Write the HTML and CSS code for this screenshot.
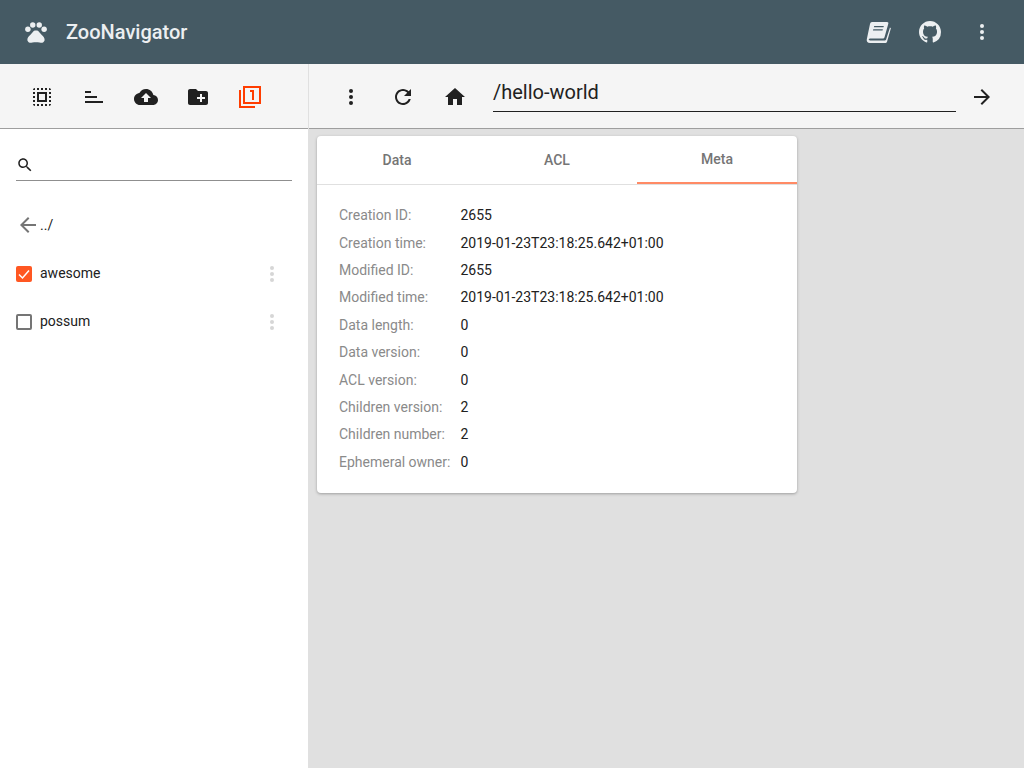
FILE: index.html
```html
<!DOCTYPE html>
<html lang="en">
<head>
    <meta charset="UTF-8">
    <title>ZooNavigator</title>
    <link rel="stylesheet" href="styles.css">
</head>
<body>
    <header class="topbar">
        <svg class="paw" width="26" height="26" viewBox="0 0 24 24"><circle cx="4.500" cy="9.500" r="2.500"/><circle cx="9" cy="5.500" r="2.500"/><circle cx="15" cy="5.500" r="2.500"/><circle cx="19.500" cy="9.500" r="2.500"/><path d="M17.34 14.86c-.87-1.02-1.6-1.89-2.48-2.91-.46-.54-1.05-1.08-1.75-1.32-.11-.04-.22-.07-.33-.09-.25-.04-.52-.04-.78-.04s-.53 0-.79.05c-.11.02-.22.05-.33.09-.7.24-1.28.78-1.75 1.32-.87 1.02-1.6 1.89-2.48 2.91-1.31 1.31-2.92 2.76-2.62 4.79.29 1.02 1.02 2.03 2.33 2.32.73.15 3.06-.44 5.54-.44h.18c2.48 0 4.81.58 5.54.44 1.31-.29 2.04-1.31 2.33-2.32.31-2.04-1.3-3.49-2.61-4.8z"/></svg>
        <span class="brand">ZooNavigator</span>
        <div class="topbar-actions">
            <button class="icon-btn">
                <svg width="28" height="24" viewBox="0 0 28 24"><path d="M8 2h15c1.2 0 1.6.8 1.3 1.8L20.6 17c-.3 1-1 1.5-2 1.5H6c-1 0-1.5.8-1.2 1.3.3.5.8.7 1.5.7h14.5c.6 0 1-.3 1.2-.8L26 7.6l.9.6-3.8 13.2c-.3 1-1.1 1.6-2.2 1.6H6c-2.3 0-3.7-1.700-3.2-3.800L6 4c.3-1.2 1-2 2-2zm2.200 4-.3 1.200h9.600l.3-1.200zm-.9 3.200-.4 1.200h9.600l.4-1.200z" fill-rule="evenodd"/></svg>
            </button>
            <button class="icon-btn">
                <svg width="22" height="22" viewBox="0 0 16 16"><path d="M8 0C3.58 0 0 3.58 0 8c0 3.54 2.29 6.53 5.47 7.59.4.07.55-.17.55-.38 0-.19-.01-.82-.01-1.49-2.01.37-2.53-.49-2.69-.94-.09-.23-.48-.94-.82-1.13-.28-.15-.68-.52-.01-.53.63-.01 1.08.58 1.23.82.72 1.21 1.87.87 2.33.66.07-.52.28-.87.51-1.07-1.78-.2-3.64-.89-3.64-3.95 0-.87.31-1.59.82-2.15-.08-.2-.36-1.02.08-2.12 0 0 .67-.21 2.2.82.64-.18 1.32-.27 2-.27s1.36.09 2 .27c1.53-1.04 2.2-.82 2.2-.82.44 1.1.16 1.92.08 2.12.51.56.82 1.27.82 2.15 0 3.07-1.87 3.75-3.65 3.95.29.25.54.73.54 1.48 0 1.07-.01 1.93-.01 2.2 0 .21.15.46.55.38A8.01 8.01 0 0 0 16 8c0-4.42-3.58-8-8-8z"/></svg>
            </button>
            <button class="icon-btn">
                <svg width="24" height="24" viewBox="0 0 24 24"><circle cx="12" cy="6" r="2"/><circle cx="12" cy="12" r="2"/><circle cx="12" cy="18" r="2"/></svg>
            </button>
        </div>
    </header>

    <div class="content">
        <aside class="sidebar">
            <div class="toolbar side-toolbar">
                <button class="icon-btn">
                    <svg width="24" height="24" viewBox="0 0 24 24"><path d="M3 5h2V3c-1.1 0-2 .9-2 2zm0 8h2v-2H3v2zm4 8h2v-2H7v2zM3 9h2V7H3v2zm10-6h-2v2h2V3zm6 0v2h2c0-1.100-.9-2-2-2zM5 21v-2H3c0 1.100.9 2 2 2zm-2-4h2v-2H3v2zM9 3H7v2h2V3zm2 18h2v-2h-2v2zm8-8h2v-2h-2v2zm0 8c1.100 0 2-.9 2-2h-2v2zm0-12h2V7h-2v2zm0 8h2v-2h-2v2zm-4 4h2v-2h-2v2zm0-16h2V3h-2v2zM7 17h10V7H7v10zm2-8h6v6H9V9z"/></svg>
                </button>
                <button class="icon-btn">
                    <svg width="24" height="24" viewBox="0 0 24 24"><path d="M3 18h18v-2H3v2zM3 6v2h6V6H3zm0 7h12v-2H3v2z"/></svg>
                </button>
                <button class="icon-btn">
                    <svg width="24" height="24" viewBox="0 0 24 24"><path d="M19.35 10.04C18.67 6.59 15.64 4 12 4 9.11 4 6.6 5.64 5.35 8.04 2.34 8.36 0 10.91 0 14c0 3.31 2.69 6 6 6h13c2.76 0 5-2.24 5-5 0-2.64-2.05-4.78-4.65-4.96zM14 13v4h-4v-4H7l5-5 5 5h-3z"/></svg>
                </button>
                <button class="icon-btn">
                    <svg width="24" height="24" viewBox="0 0 24 24"><path d="M20 6h-8l-2-2H4c-1.11 0-1.99.89-1.99 2L2 18c0 1.11.89 2 2 2h16c1.11 0 2-.89 2-2V8c0-1.11-.89-2-2-2zm-1 8h-3v3h-2v-3h-3v-2h3V9h2v3h3v2z"/></svg>
                </button>
                <button class="icon-btn clip-btn">
                    <svg width="24" height="24" viewBox="0 0 24 24"><path d="M3 5H1v18h16v-2H3V5zm11 10h2V5h-4v2h2v8zm9-14H5v18h18V1zm-2 16H7V3h14v14z"/></svg>
                </button>
            </div>
            <div class="search">
                <svg width="18" height="18" viewBox="0 0 24 24"><path d="M15.5 14h-.79l-.28-.27C15.41 12.59 16 11.11 16 9.500 16 5.910 13.090 3 9.500 3S3 5.910 3 9.500 5.910 16 9.500 16c1.610 0 3.090-.59 4.230-1.570l.27.28v.79l5 4.990L20.490 19l-4.990-5zm-6 0C7.010 14 5 11.990 5 9.500S7.010 5 9.500 5 14 7.010 14 9.500 11.990 14 9.500 14z"/></svg>
            </div>
            <div class="parent-row">
                <svg class="back" width="24" height="24" viewBox="0 0 24 24"><path d="M20 11H7.830l5.590-5.590L12 4l-8 8 8 8 1.410-1.410L7.830 13H20v-2z"/></svg>
                <span>../</span>
            </div>
            <ul class="nodes">
                <li class="node">
                    <span class="check checked">
                        <svg width="16" height="16" viewBox="0 0 16 16"><path d="M3 8.500 6.500 12 13 4.500" fill="none" stroke="#fff" stroke-width="1.500"/></svg>
                    </span>
                    <span class="node-name">awesome</span>
                    <svg class="node-more" width="24" height="24" viewBox="0 0 24 24"><circle cx="12" cy="6" r="2"/><circle cx="12" cy="12" r="2"/><circle cx="12" cy="18" r="2"/></svg>
                </li>
                <li class="node">
                    <span class="check"></span>
                    <span class="node-name">possum</span>
                    <svg class="node-more" width="24" height="24" viewBox="0 0 24 24"><circle cx="12" cy="6" r="2"/><circle cx="12" cy="12" r="2"/><circle cx="12" cy="18" r="2"/></svg>
                </li>
            </ul>
        </aside>

        <main class="main">
            <div class="toolbar path-toolbar">
                <button class="icon-btn">
                    <svg width="24" height="24" viewBox="0 0 24 24"><circle cx="12" cy="6" r="2"/><circle cx="12" cy="12" r="2"/><circle cx="12" cy="18" r="2"/></svg>
                </button>
                <button class="icon-btn">
                    <svg width="24" height="24" viewBox="0 0 24 24"><path d="M17.650 6.350C16.200 4.900 14.210 4 12 4c-4.420 0-7.990 3.580-7.990 8s3.570 8 7.990 8c3.730 0 6.840-2.550 7.730-6h-2.080c-.82 2.330-3.040 4-5.650 4-3.310 0-6-2.690-6-6s2.690-6 6-6c1.660 0 3.140.69 4.220 1.780L13 11h7V4l-2.350 2.350z"/></svg>
                </button>
                <button class="icon-btn">
                    <svg width="24" height="24" viewBox="0 0 24 24"><path d="M10 20v-6h4v6h5v-8h3L12 3 2 12h3v8z"/></svg>
                </button>
                <div class="path-input">/hello-world</div>
                <button class="icon-btn">
                    <svg width="24" height="24" viewBox="0 0 24 24"><path d="M12 4l-1.410 1.410L16.170 11H4v2h12.170l-5.580 5.590L12 20l8-8z"/></svg>
                </button>
            </div>
            <div class="main-body">
                <section class="card">
                    <div class="tabs">
                        <div class="tab">Data</div>
                        <div class="tab">ACL</div>
                        <div class="tab active">Meta</div>
                    </div>
                    <dl class="meta">
                        <dt>Creation ID:</dt><dd>2655</dd>
                        <dt>Creation time:</dt><dd>2019-01-23T23:18:25.642+01:00</dd>
                        <dt>Modified ID:</dt><dd>2655</dd>
                        <dt>Modified time:</dt><dd>2019-01-23T23:18:25.642+01:00</dd>
                        <dt>Data length:</dt><dd>0</dd>
                        <dt>Data version:</dt><dd>0</dd>
                        <dt>ACL version:</dt><dd>0</dd>
                        <dt>Children version:</dt><dd>2</dd>
                        <dt>Children number:</dt><dd>2</dd>
                        <dt>Ephemeral owner:</dt><dd>0</dd>
                    </dl>
                </section>
            </div>
        </main>
    </div>
</body>
</html>
```

FILE: styles.css
```css
* {
    box-sizing: border-box;
}

html, body {
    height: 100%;
}

body {
    margin: 0;
    font-family: Roboto, "Liberation Sans", sans-serif;
    font-size: 14px;
    color: #212121;
    background-color: #e0e0e0;
    display: flex;
    flex-direction: column;
    overflow: hidden;
}

svg {
    display: block;
    fill: currentColor;
}

.topbar {
    height: 64px;
    flex: none;
    display: flex;
    align-items: center;
    padding: 0 16px 0 23px;
    background-color: #455a64;
    color: #eceff1;
}

.brand {
    margin-left: 17px;
    font-size: 20px;
    font-weight: 500;
}

.topbar-actions {
    margin-left: auto;
    display: flex;
    align-items: center;
}

.icon-btn {
    width: 52px;
    height: 48px;
    flex: none;
    display: flex;
    align-items: center;
    justify-content: center;
    padding: 0;
    border: none;
    background: none;
    color: inherit;
    cursor: pointer;
}

.content {
    flex: 1;
    display: flex;
    min-height: 0;
}

.sidebar {
    width: 309px;
    flex: none;
    background-color: #fff;
    border-right: 1px solid #e0e0e0;
}

.main {
    flex: 1;
    min-width: 0;
}

.toolbar {
    height: 65px;
    display: flex;
    align-items: center;
    padding-top: 2px;
    background-color: #f5f5f5;
    border-bottom: 1px solid #9e9e9e;
    color: #212121;
}

.side-toolbar {
    padding-left: 16px;
}

.clip-btn {
    color: #ff3d00;
}

.path-toolbar {
    padding-left: 16px;
    padding-right: 16px;
}

.path-input {
    flex: 1;
    height: 36px;
    margin: -6px 0 0 12px;
    font-size: 20px;
    line-height: 32px;
    border-bottom: 1px solid #212121;
}

.search {
    height: 36px;
    margin: 16px 16px 0;
    padding-top: 11px;
    border-bottom: 1px solid #8f8f8f;
}

.parent-row {
    display: flex;
    align-items: center;
    height: 48px;
    margin-top: 20px;
    padding-left: 16px;
}

.back {
    color: #757575;
}

.nodes {
    margin: 0;
    padding: 0;
    list-style: none;
}

.node {
    display: flex;
    align-items: center;
    height: 48px;
    padding: 0 24px 0 16px;
}

.check {
    width: 16px;
    height: 16px;
    margin-top: 2px;
    border: 2px solid #757575;
    border-radius: 2px;
}

.check.checked {
    border: none;
    background-color: #ff5722;
}

.node-name {
    margin-left: 8px;
}

.node-more {
    margin-top: 2px;
    margin-left: auto;
    color: #d6d6d6;
}

.main-body {
    padding: 7px 8px;
}

.card {
    width: 480px;
    background-color: #fff;
    border-radius: 4px;
    box-shadow: 0 1px 3px rgba(0, 0, 0, 0.3);
}

.tabs {
    display: flex;
    height: 49px;
    border-bottom: 1px solid #e0e0e0;
}

.tab {
    flex: 1;
    display: flex;
    align-items: center;
    justify-content: center;
    font-weight: 500;
    color: #757575;
}

.tab.active {
    border-bottom: 2px solid #ff8a65;
}

.meta {
    display: grid;
    grid-template-columns: max-content 1fr;
    grid-auto-rows: 27.400px;
    align-items: center;
    column-gap: 10px;
    margin: 0;
    padding: 16.600px 22px 17.400px;
}

.meta dt {
    color: #8a8a8a;
}

.meta dd {
    margin: 0;
}
```
